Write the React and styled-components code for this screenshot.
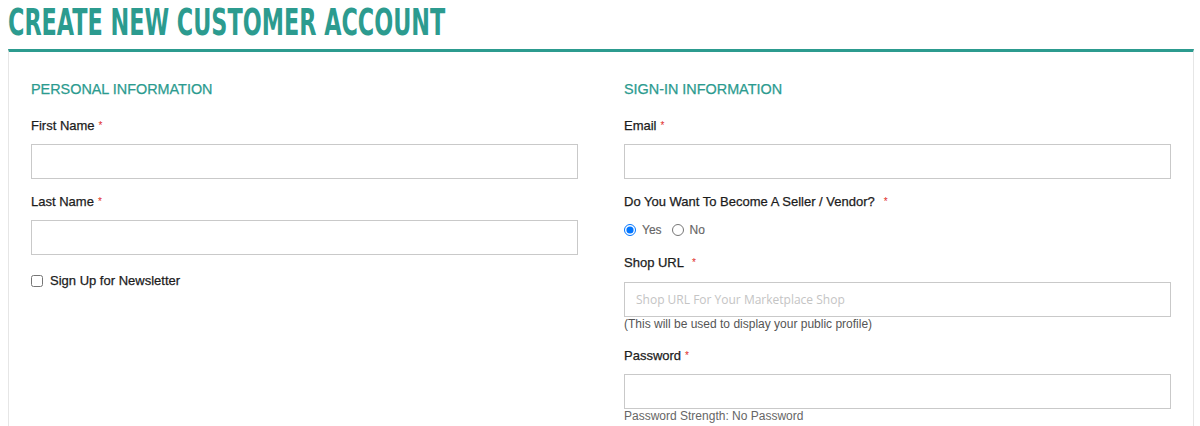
import React from "react";
import styled, { createGlobalStyle } from "styled-components";

const Global = createGlobalStyle`
  html, body { margin: 0; padding: 0; background: #fff; }
  body { font-family: "Liberation Sans", Arial, sans-serif; color: #222; }
  * { box-sizing: border-box; }
`;

const TEAL = "#2c9b8f";

const Page = styled.div`
  padding: 0 6px 0 8px;
  width: 1200px;
  height: 426px;
  overflow: hidden;
`;

const TitleBar = styled.div`
  height: 49px;
  display: flex;
  align-items: flex-start;
`;

const Title = styled.h1`
  margin: 0;
  font-family: "DejaVu Sans Condensed", "Liberation Sans Narrow", "DejaVu Sans", sans-serif;
  font-weight: bold;
  font-size: 37.5px;
  line-height: 44px;
  color: ${TEAL};
  transform: scaleX(0.662);
  transform-origin: left center;
  white-space: nowrap;
`;

const Panel = styled.div`
  border-top: 3px solid ${TEAL};
  border-left: 1px solid #e6e6e6;
  border-right: 1px solid #e6e6e6;
  padding: 28px 22px 0 22px;
  display: grid;
  grid-template-columns: 547px 547px;
  column-gap: 46px;
  min-height: 380px;
`;

const Column = styled.div`
  display: flex;
  flex-direction: column;
`;

const SectionTitle = styled.h2`
  margin: 0 0 19px;
  font-size: 14.4px;
  line-height: 18px;
  font-weight: normal;
  color: ${TEAL};
  -webkit-text-stroke: 0.25px ${TEAL};
  text-transform: uppercase;
`;

const Field = styled.div`
  display: flex;
  flex-direction: column;
  margin-bottom: ${(p) => p.$mb ?? 14}px;
`;

const Label = styled.label`
  font-size: 13px;
  line-height: 18px;
  height: 18px;
  color: #1c1c1c;
  -webkit-text-stroke: 0.25px #1c1c1c;
  margin-bottom: ${(p) => p.$mb ?? 9}px;
`;

const Star = styled.span`
  color: #e02b27;
  font-size: 10px;
  margin-left: ${(p) => p.$gap ?? 4}px;
  -webkit-text-stroke: 0;
  vertical-align: 1px;
`;

const Input = styled.input`
  width: 100%;
  height: 35px;
  border: 1px solid #c9c9c9;
  background: #fff;
  padding: 0 11px;
  font-family: "Open Sans", sans-serif;
  font-size: 12px;
  outline: none;
  &::placeholder { color: #c4c4c4; }
`;

const RadioRow = styled.div`
  display: flex;
  align-items: center;
  height: 18px;
  padding-top: 1px;
`;

const Radio = styled.input.attrs({ type: "radio" })`
  width: 12px;
  height: 12px;
  margin: 0 6px 0 0;
`;

const RadioText = styled.span`
  font-size: 12px;
  color: #666;
  margin-right: 10px;
  -webkit-text-stroke: 0.15px #666;
`;

const Note = styled.div`
  font-size: 12px;
  line-height: 14px;
  color: ${(p) => p.$color || "#555"};
`;

const CheckRow = styled.label`
  display: flex;
  align-items: center;
  height: 18px;
  font-size: 13px;
  color: #1c1c1c;
  -webkit-text-stroke: 0.25px #1c1c1c;
`;

const Check = styled.input.attrs({ type: "checkbox" })`
  width: 12px;
  height: 12px;
  margin: 1px 7px 0 0;
`;

export default function App() {
  return (
    <>
      <Global />
      <Page>
        <TitleBar>
          <Title>CREATE NEW CUSTOMER ACCOUNT</Title>
        </TitleBar>
        <Panel>
          <Column>
            <SectionTitle>Personal Information</SectionTitle>
            <Field>
              <Label>First Name<Star>*</Star></Label>
              <Input />
            </Field>
            <Field $mb={16}>
              <Label>Last Name<Star>*</Star></Label>
              <Input />
            </Field>
            <CheckRow>
              <Check />
              Sign Up for Newsletter
            </CheckRow>
          </Column>
          <Column>
            <SectionTitle>Sign-in Information</SectionTitle>
            <Field>
              <Label>Email<Star>*</Star></Label>
              <Input />
            </Field>
            <Field $mb={16}>
              <Label>Do You Want To Become A Seller / Vendor?<Star $gap={9}>*</Star></Label>
              <RadioRow>
                <Radio name="seller" defaultChecked />
                <RadioText>Yes</RadioText>
                <Radio name="seller" />
                <RadioText>No</RadioText>
              </RadioRow>
            </Field>
            <Field $mb={16}>
              <Label $mb={10}>Shop URL<Star $gap={8}>*</Star></Label>
              <Input placeholder="Shop URL For Your Marketplace Shop" />
              <Note>(This will be used to display your public profile)</Note>
            </Field>
            <Field>
              <Label>Password<Star>*</Star></Label>
              <Input type="password" />
              <Note $color="#666">Password Strength: No Password</Note>
            </Field>
          </Column>
        </Panel>
      </Page>
    </>
  );
}
